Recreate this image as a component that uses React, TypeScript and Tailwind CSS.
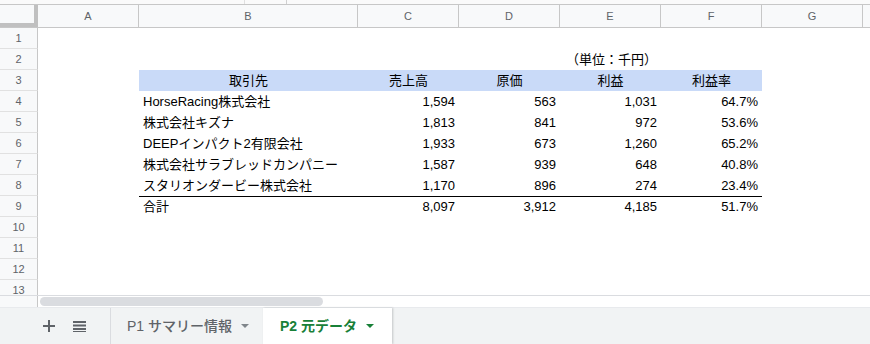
import React from 'react';

const font = { fontFamily: '"Liberation Sans", Arial, "Noto Sans CJK JP", sans-serif' };

// column widths (incl. right border) for A..H
const cols = [
  { key: 'A', w: 'w-[101px]' },
  { key: 'B', w: 'w-[219px]' },
  { key: 'C', w: 'w-[101px]' },
  { key: 'D', w: 'w-[101px]' },
  { key: 'E', w: 'w-[101px]' },
  { key: 'F', w: 'w-[101px]' },
  { key: 'G', w: 'w-[101px]' },
];

type Row = [string, string, string, string, string];

const data: Row[] = [
  ['HorseRacing株式会社', '1,594', '563', '1,031', '64.7%'],
  ['株式会社キズナ', '1,813', '841', '972', '53.6%'],
  ['DEEPインパクト2有限会社', '1,933', '673', '1,260', '65.2%'],
  ['株式会社サラブレッドカンパニー', '1,587', '939', '648', '40.8%'],
  ['スタリオンダービー株式会社', '1,170', '896', '274', '23.4%'],
];
const total: Row = ['合計', '8,097', '3,912', '4,185', '51.7%'];

const RowHead = ({ n }: { n: number }) => (
  <div className="w-[38px] shrink-0 h-full flex items-center justify-center bg-[#f8f9fa] border-r border-b border-[#c7c7c7] border-b-[#e1e1e1] text-[11px] text-[#5f6368]">
    {n}
  </div>
);

const Blank = ({ w }: { w: string }) => <div className={`${w} shrink-0 h-full`} />;

const DataRow = ({ n, row, top }: { n: number; row: Row; top?: boolean }) => (
  <div className="flex h-[21px]">
    <RowHead n={n} />
    <Blank w="w-[101px]" />
    <div className={`flex h-full text-[13px] text-black ${top ? 'border-t border-black' : ''}`}>
      <div className="w-[219px] px-[4px] flex items-center whitespace-nowrap">{row[0]}</div>
      {row.slice(1).map((v, i) => (
        <div key={i} className="w-[101px] px-[4px] flex items-center justify-end">{v}</div>
      ))}
    </div>
  </div>
);

const Caret = ({ color }: { color: string }) => (
  <svg width="8" height="4" viewBox="0 0 8 4" className="ml-[9px]">
    <path d="M0 0h8L4 4z" fill={color} />
  </svg>
);

export default function App() {
  const emptyRows = [10, 11, 12, 13];
  return (
    <div className="w-[870px] h-[344px] overflow-hidden bg-white flex flex-col" style={font}>
      {/* toolbar remnant */}
      <div className="h-[5px] shrink-0 flex border-b border-[#c7c7c7] bg-[#fafafa]">
        <div className="w-[245px] border-r border-[#e0e0e0]" />
        <div className="w-[42px] border-r border-[#d0d0d0]" />
      </div>

      {/* column headers */}
      <div className="h-[23px] shrink-0 flex bg-[#f8f9fa] border-b border-[#c7c7c7]">
        <div className="w-[38px] shrink-0 h-full border-r-4 border-b-4 border-[#c0c0c0] -mb-[1px]" />
        {cols.map((c) => (
          <div
            key={c.key}
            className={`${c.w} shrink-0 h-full flex items-center justify-center border-r border-[#c7c7c7] text-[11px] text-[#5f6368]`}
          >
            {c.key}
          </div>
        ))}
        <div className="flex-1" />
      </div>

      {/* grid body */}
      <div className="h-[267px] shrink-0 overflow-hidden">
        <div className="flex h-[21px]">
          <RowHead n={1} />
        </div>
        <div className="flex h-[21px]">
          <RowHead n={2} />
          <Blank w="w-[101px]" />
          <Blank w="w-[219px]" />
          <Blank w="w-[101px]" />
          <Blank w="w-[101px]" />
          <div className="w-[101px] px-[4px] flex items-center justify-end text-[13px] text-black whitespace-nowrap">
            （単位：千円）
          </div>
        </div>
        <div className="flex h-[21px]">
          <RowHead n={3} />
          <Blank w="w-[101px]" />
          <div className="flex h-full bg-[#c9daf8] text-[13px] text-black">
            <div className="w-[219px] flex items-center justify-center">取引先</div>
            <div className="w-[101px] flex items-center justify-center">売上高</div>
            <div className="w-[101px] flex items-center justify-center">原価</div>
            <div className="w-[101px] flex items-center justify-center">利益</div>
            <div className="w-[101px] flex items-center justify-center">利益率</div>
          </div>
        </div>
        {data.map((r, i) => (
          <DataRow key={i} n={i + 4} row={r} />
        ))}
        <DataRow n={9} row={total} top />
        {emptyRows.map((n) => (
          <div key={n} className="flex h-[21px]">
            <RowHead n={n} />
          </div>
        ))}
      </div>

      {/* horizontal scrollbar */}
      <div className="h-[12px] shrink-0 flex border-t border-[#dadce0]">
        <div className="w-[38px] shrink-0 bg-[#f8f9fa] border-r border-[#c7c7c7]" />
        <div className="flex-1 px-[2px] pt-[1px]">
          <div className="w-[283px] h-[9px] rounded-full bg-[#dadce0]" />
        </div>
      </div>

      {/* sheet tabs */}
      <div className="h-[37px] shrink-0 flex bg-[#f1f3f4] border-t border-[#e8eaed]">
        <div className="w-[110px] shrink-0 flex items-center">
          <svg width="12" height="12" viewBox="0 0 12 12" className="ml-[43px]">
            <path d="M5 0h2v5h5v2H7v5H5V7H0V5h5z" fill="#5f6368" />
          </svg>
          <svg width="13" height="12" viewBox="0 0 13 12" className="ml-[18px]">
            <path d="M0 1h13v2H0zM0 4.5h13v2H0zM0 8h13v2H0zM0 11h13v1H0z" fill="#5f6368" />
          </svg>
        </div>
        <div className="w-[153px] shrink-0 flex items-center pl-[16px] border-l border-[#dadce0] text-[14px] font-medium text-[#5f6368]">
          <span className="whitespace-nowrap">P1 サマリー情報</span>
          <Caret color="#80868b" />
        </div>
        <div className="w-[129px] shrink-0 flex items-center pl-[17px] bg-white text-[14px] font-bold text-[#188038] shadow-[1px_0_2px_rgba(60,64,67,0.25)]">
          <span className="whitespace-nowrap">P2 元データ</span>
          <Caret color="#188038" />
        </div>
      </div>
    </div>
  );
}
